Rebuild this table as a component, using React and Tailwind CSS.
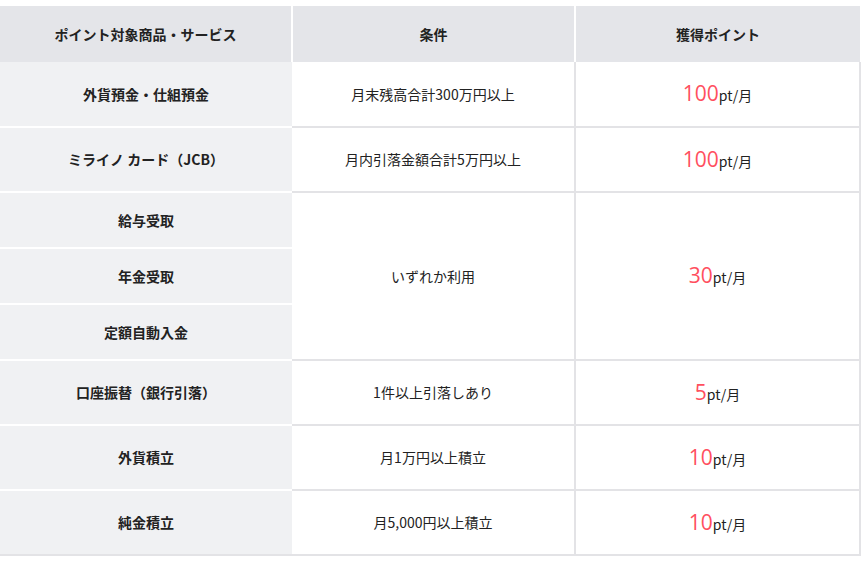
const rows = [
  { name: "外貨預金・仕組預金", cond: "月末残高合計300万円以上", pt: "100", h: "h-[65px]" },
  { name: "ミライノ カード（JCB）", cond: "月内引落金額合計5万円以上", pt: "100", h: "h-[65px]" },
];

const rows2 = [
  { name: "口座振替（銀行引落）", cond: "1件以上引落しあり", pt: "5" },
  { name: "外貨積立", cond: "月1万円以上積立", pt: "10" },
  { name: "純金積立", cond: "月5,000円以上積立", pt: "10" },
];

function Point({ value }) {
  return (
    <span className="inline-flex items-baseline">
      <span className="text-[21px] text-[#ff4f5e] font-['Open_Sans','Noto_Sans',sans-serif]">{value}</span>
      <span className="text-[14px] text-[#222]">pt/月</span>
    </span>
  );
}

export default function App() {
  const nameCell = "bg-[#f0f1f3] border-b-2 border-white font-bold text-center";
  const bodyCell = "border-b-2 border-r-2 border-[#e3e3e6] text-center";
  return (
    <div className="w-[867px] h-[563px] bg-white pt-[6px] font-['Noto_Sans_CJK_JP','Noto_Sans',sans-serif] text-[14px] text-[#222]">
      <table className="w-[860px] border-collapse table-fixed">
        <colgroup>
          <col className="w-[292px]" />
          <col className="w-[283px]" />
          <col className="w-[285px]" />
        </colgroup>
        <thead>
          <tr className="h-[56px] bg-[#e4e5e9]">
            <th className="border-r-2 border-white font-bold">ポイント対象商品・サービス</th>
            <th className="border-r-2 border-white font-bold">条件</th>
            <th className="font-bold">獲得ポイント</th>
          </tr>
        </thead>
        <tbody>
          {rows.map((r) => (
            <tr key={r.name} className={r.h}>
              <th className={nameCell}>{r.name}</th>
              <td className={bodyCell}>{r.cond}</td>
              <td className={bodyCell}>
                <Point value={r.pt} />
              </td>
            </tr>
          ))}
          <tr className="h-[56px]">
            <th className={nameCell}>給与受取</th>
            <td rowSpan={3} className={bodyCell}>いずれか利用</td>
            <td rowSpan={3} className={bodyCell}>
              <Point value="30" />
            </td>
          </tr>
          <tr className="h-[56px]">
            <th className={nameCell}>年金受取</th>
          </tr>
          <tr className="h-[56px]">
            <th className={nameCell}>定額自動入金</th>
          </tr>
          {rows2.map((r, i) => (
            <tr key={r.name} className="h-[65px]">
              <th className={i === rows2.length - 1 ? "bg-[#f0f1f3] border-b-2 border-[#e3e3e6] font-bold text-center" : nameCell}>
                {r.name}
              </th>
              <td className={bodyCell}>{r.cond}</td>
              <td className={bodyCell}>
                <Point value={r.pt} />
              </td>
            </tr>
          ))}
        </tbody>
      </table>
    </div>
  );
}
